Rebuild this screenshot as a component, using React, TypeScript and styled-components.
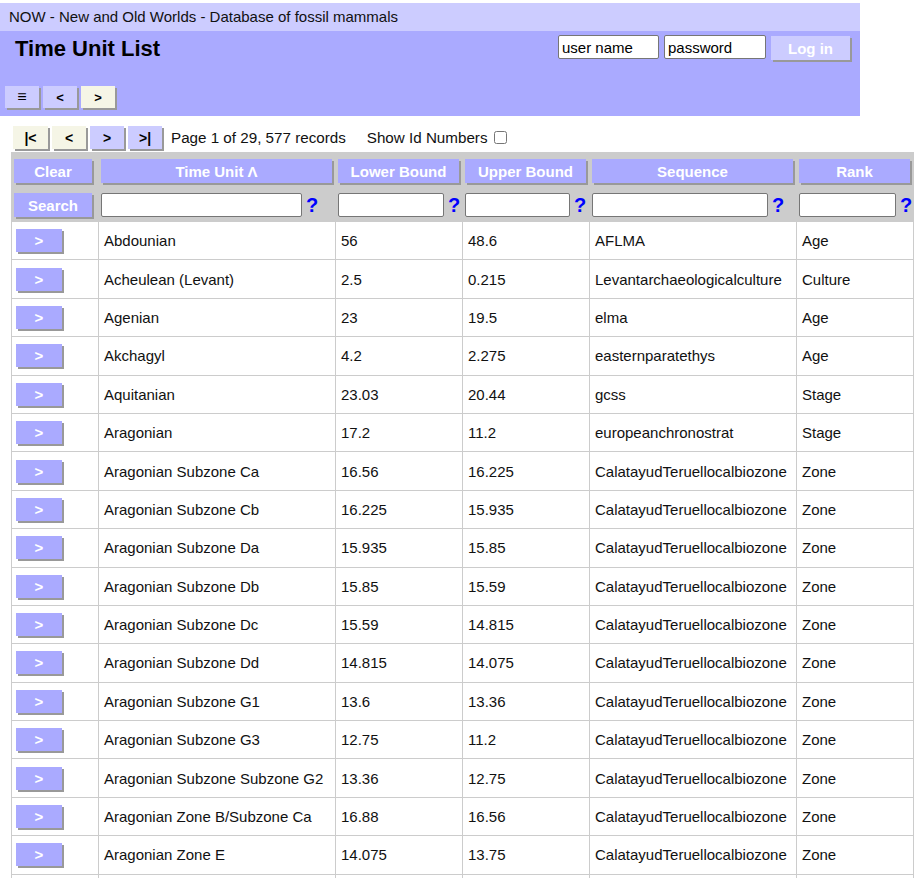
import React from "react";
import styled, { createGlobalStyle } from "styled-components";

const Global = createGlobalStyle`
  html, body { margin: 0; padding: 0; background: #fff; }
  body {
    font-family: "Liberation Sans", Arial, sans-serif;
    font-size: 15px;
    color: #000;
  }
`;

const Page = styled.div`
  padding-top: 3px;
`;

const Banner = styled.header`
  width: 860px;
`;

const TopBar = styled.div`
  background: #ccf;
  height: 28px;
  line-height: 28px;
  padding-left: 9px;
  font-size: 15px;
  color: #111;
`;

const MainBar = styled.div`
  background: #aaf;
  height: 85px;
  box-sizing: border-box;
  padding: 2px 10px 8px 5px;
  display: flex;
  flex-direction: column;
  justify-content: space-between;
`;

const HeadRow = styled.div`
  display: flex;
  justify-content: space-between;
  align-items: flex-start;
`;

const Title = styled.h1`
  margin: 3px 0 0 10px;
  font-size: 22px;
  line-height: 25px;
  font-weight: bold;
  color: #000;
`;

const LoginForm = styled.form`
  display: flex;
  gap: 5px;
  margin-top: 2px;
`;

const LoginInput = styled.input<{ $w: number }>`
  width: ${(p) => p.$w}px;
  height: 24px;
  box-sizing: border-box;
  border: 1px solid #767676;
  border-radius: 2px;
  padding: 1px 3px;
  font-family: "Liberation Sans", Arial, sans-serif;
  font-size: 15px;
  color: #000;
  background: #fff;
  &::placeholder { color: #000; opacity: 1; }
`;

const ShadowButton = styled.button<{ $bg?: string; $w: number; $h: number; $fg?: string; $fs?: number }>`
  width: ${(p) => p.$w}px;
  height: ${(p) => p.$h}px;
  background: ${(p) => p.$bg || "#aaf"};
  color: ${(p) => p.$fg || "#fff"};
  font-family: "Liberation Sans", Arial, sans-serif;
  font-weight: bold;
  font-size: ${(p) => p.$fs || 15}px;
  border: none;
  border-radius: 0;
  padding: 0;
  box-shadow: 2px 2px 0 #999;
  cursor: pointer;
  flex: none;
`;

const LoginButton = styled(ShadowButton)`
  margin-top: 1px;
`;

const NavRow = styled.nav`
  display: flex;
  gap: 4px;
`;

const Pager = styled.div`
  display: flex;
  align-items: center;
  gap: 4px;
  height: 23px;
  margin: 10px 0 0 13px;
`;

const PagerInfo = styled.span`
  margin-left: 5px;
  font-size: 15.2px;
  color: #111;
`;

const ShowIds = styled.label`
  margin-left: 17px;
  display: flex;
  align-items: center;
  font-size: 15.2px;
  color: #111;
`;

const Check = styled.input`
  width: 13px;
  height: 13px;
  margin: 0 0 0 6px;
`;

const Table = styled.table`
  margin: 3px 0 0 11px;
  width: 902px;
  border-collapse: collapse;
  table-layout: fixed;
`;

const HeadCell = styled.th<{ $narrow?: boolean }>`
  background: #ccc;
  border: 1px solid #ccc;
  padding: 6px ${(p) => (p.$narrow ? "6px" : "3px")} 4px 2px;
  text-align: left;
  font-weight: normal;
`;

const FilterCell = styled.td<{ $narrow?: boolean }>`
  background: #ccc;
  border: 1px solid #ccc;
  padding: 5px ${(p) => (p.$narrow ? "6px" : "2px")} 4px 2px;
`;

const HeadButton = styled.button`
  display: block;
  width: 100%;
  height: 24px;
  background: #aaf;
  color: #fff;
  font-family: "Liberation Sans", Arial, sans-serif;
  font-weight: bold;
  font-size: 15px;
  border: none;
  padding: 0;
  box-shadow: 2px 2px 0 #999;
`;

const FilterWrap = styled.div`
  display: flex;
  align-items: center;
`;

const FilterInput = styled.input<{ $w: number }>`
  width: ${(p) => p.$w}px;
  height: 24px;
  box-sizing: border-box;
  border: 1px solid #767676;
  border-radius: 2px;
  background: #fff;
  padding: 1px 3px;
  font-size: 15px;
  flex: none;
`;

const Help = styled.span`
  margin-left: 4px;
  color: #00f;
  font-weight: bold;
  font-size: 20px;
  line-height: 20px;
`;

const Row = styled.tr`
  height: 38.4px;
`;

const Cell = styled.td<{ $first?: boolean }>`
  border: 1px solid #ccc;
  padding: 0 ${(p) => (p.$first ? "0 0 4px" : "4px 0 5px")};
  vertical-align: middle;
  color: #111;
  font-size: 15px;
  white-space: nowrap;
  overflow: hidden;
`;

type Unit = [string, string, string, string, string];

const rows: Unit[] = [
  ["Abdounian", "56", "48.6", "AFLMA", "Age"],
  ["Acheulean (Levant)", "2.5", "0.215", "Levantarchaeologicalculture", "Culture"],
  ["Agenian", "23", "19.5", "elma", "Age"],
  ["Akchagyl", "4.2", "2.275", "easternparatethys", "Age"],
  ["Aquitanian", "23.03", "20.44", "gcss", "Stage"],
  ["Aragonian", "17.2", "11.2", "europeanchronostrat", "Stage"],
  ["Aragonian Subzone Ca", "16.56", "16.225", "CalatayudTeruellocalbiozone", "Zone"],
  ["Aragonian Subzone Cb", "16.225", "15.935", "CalatayudTeruellocalbiozone", "Zone"],
  ["Aragonian Subzone Da", "15.935", "15.85", "CalatayudTeruellocalbiozone", "Zone"],
  ["Aragonian Subzone Db", "15.85", "15.59", "CalatayudTeruellocalbiozone", "Zone"],
  ["Aragonian Subzone Dc", "15.59", "14.815", "CalatayudTeruellocalbiozone", "Zone"],
  ["Aragonian Subzone Dd", "14.815", "14.075", "CalatayudTeruellocalbiozone", "Zone"],
  ["Aragonian Subzone G1", "13.6", "13.36", "CalatayudTeruellocalbiozone", "Zone"],
  ["Aragonian Subzone G3", "12.75", "11.2", "CalatayudTeruellocalbiozone", "Zone"],
  ["Aragonian Subzone Subzone G2", "13.36", "12.75", "CalatayudTeruellocalbiozone", "Zone"],
  ["Aragonian Zone B/Subzone Ca", "16.88", "16.56", "CalatayudTeruellocalbiozone", "Zone"],
  ["Aragonian Zone E", "14.075", "13.75", "CalatayudTeruellocalbiozone", "Zone"],
  ["Aragonian Zone F", "13.75", "13.6", "CalatayudTeruellocalbiozone", "Zone"],
  ["Aragonian Zone G", "13.6", "11.2", "CalatayudTeruellocalbiozone", "Zone"],
  ["Astaracian", "13.8", "11.1", "elma", "Age"],
];

const cols = [87, 237, 127, 127, 207, 117];
const headers = ["Time Unit Λ", "Lower Bound", "Upper Bound", "Sequence", "Rank"];
const filterWidths = [201, 106, 105, 176, 97];

export default function App() {
  return (
    <Page>
      <Global />
      <Banner>
        <TopBar>NOW - New and Old Worlds - Database of fossil mammals</TopBar>
        <MainBar>
          <HeadRow>
            <Title>Time Unit List</Title>
            <LoginForm onSubmit={(e) => e.preventDefault()}>
              <LoginInput $w={101} placeholder="user name" />
              <LoginInput $w={102} type="password" placeholder="password" />
              <LoginButton type="submit" $bg="#ccf" $w={79} $h={24}>
                Log in
              </LoginButton>
            </LoginForm>
          </HeadRow>
          <NavRow>
            <ShadowButton $bg="#ccf" $fg="#000" $w={34} $h={22} $fs={16}>≡</ShadowButton>
            <ShadowButton $bg="#ccf" $fg="#000" $w={34} $h={22} $fs={13}>&lt;</ShadowButton>
            <ShadowButton $bg="#f5f5e6" $fg="#000" $w={34} $h={22} $fs={13}>&gt;</ShadowButton>
          </NavRow>
        </MainBar>
      </Banner>

      <Pager>
        <ShadowButton $bg="#f5f5e6" $fg="#000" $w={35} $h={23} $fs={14}>|&lt;</ShadowButton>
        <ShadowButton $bg="#f5f5e6" $fg="#000" $w={34} $h={23} $fs={14}>&lt;</ShadowButton>
        <ShadowButton $bg="#ccf" $fg="#000" $w={34} $h={23} $fs={14}>&gt;</ShadowButton>
        <ShadowButton $bg="#ccf" $fg="#000" $w={34} $h={23} $fs={14}>&gt;|</ShadowButton>
        <PagerInfo>Page 1 of 29, 577 records</PagerInfo>
        <ShowIds>
          Show Id Numbers
          <Check type="checkbox" />
        </ShowIds>
      </Pager>

      <Table>
        <colgroup>
          {cols.map((w, i) => (
            <col key={i} style={{ width: w }} />
          ))}
        </colgroup>
        <thead>
          <tr>
            <HeadCell $narrow>
              <HeadButton>Clear</HeadButton>
            </HeadCell>
            {headers.map((h) => (
              <HeadCell key={h}>
                <HeadButton>{h}</HeadButton>
              </HeadCell>
            ))}
          </tr>
          <tr>
            <FilterCell $narrow>
              <HeadButton>Search</HeadButton>
            </FilterCell>
            {filterWidths.map((w, i) => (
              <FilterCell key={i}>
                <FilterWrap>
                  <FilterInput $w={w} />
                  <Help>?</Help>
                </FilterWrap>
              </FilterCell>
            ))}
          </tr>
        </thead>
        <tbody>
          {rows.map((r) => (
            <Row key={r[0]}>
              <Cell $first>
                <ShadowButton $w={46} $h={23} $bg="#aaf">&gt;</ShadowButton>
              </Cell>
              {r.map((v, i) => (
                <Cell key={i}>{v}</Cell>
              ))}
            </Row>
          ))}
        </tbody>
      </Table>
    </Page>
  );
}
